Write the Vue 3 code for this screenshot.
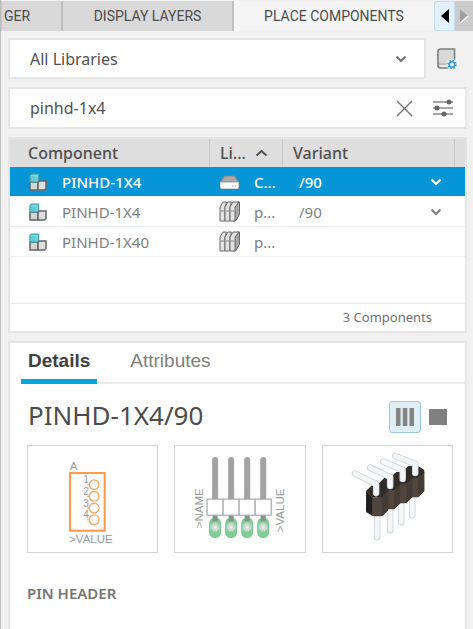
<script setup>
import { ref } from 'vue'

const library = ref('all')
const query = ref('pinhd-1x4')
const selected = ref(0)
const rows = [
  { name: 'PINHD-1X4', lib: 'C...', kind: 'drive', variant: '/90' },
  { name: 'PINHD-1X4', lib: 'p...', kind: 'books', variant: '/90' },
  { name: 'PINHD-1X40', lib: 'p...', kind: 'books', variant: '' }
]
const pins = [0, 1, 2, 3]
const pads = [40, 56, 72, 88]
const lobes = [
  { x: 90, y: 30 },
  { x: 78, y: 36 },
  { x: 66, y: 42 },
  { x: 54, y: 49 }
]
</script>

<template>
  <div class="panel">
    <nav class="tabs" aria-label="Panels">
      <button class="tab tab-cut">GER</button>
      <button class="tab tab-mid">DISPLAY LAYERS</button>
      <button class="tab tab-on">PLACE COMPONENTS</button>
      <button class="scroll scroll-prev" aria-label="Scroll left">
        <svg width="8" height="14" viewBox="0 0 8 14"><path d="M8 0v14L0 7z" fill="#000" /></svg>
      </button>
      <button class="scroll scroll-next" aria-label="Scroll right">
        <svg width="10" height="16" viewBox="0 0 10 16"><path d="M1 1v14L9 8z" fill="#a0a0a0" /><path d="M1.500 15L9 8" stroke="#fff" stroke-width="1.500" /></svg>
      </button>
    </nav>

    <main class="body">
      <div class="library-row">
        <div class="box select-box">
          <select v-model="library" aria-label="Library">
            <option value="all">All Libraries</option>
          </select>
          <svg class="chev" width="12" height="8" viewBox="0 0 12 8"><path d="M1.500 1.500L6 6l4.500-4.500" fill="none" stroke="#777" stroke-width="2.200" /></svg>
        </div>
        <button class="icon-btn lib-btn" aria-label="Library manager">
          <svg width="20" height="22" viewBox="0 0 20 22">
            <path d="M4 1h13.500v19H3.500Q1 20 1 17.500V3.500Q1 1 4 1z" fill="#d9d9d9" stroke="#7d7d7d" stroke-width="1.600" />
            <path d="M2 16h9" stroke="#aaa" />
            <path d="M3 17.500h8v1.500H4z" fill="#eee" />
            <circle cx="15" cy="16.500" r="5.500" fill="#f1f1f1" />
            <circle cx="15" cy="16.500" r="2.700" fill="#f1f1f1" stroke="#2f98e4" stroke-width="1.600" />
            <circle cx="15" cy="16.500" r="4" fill="none" stroke="#2f98e4" stroke-width="1.500" stroke-dasharray="1.500 1.642" />
          </svg>
        </button>
      </div>

      <div class="box search-box">
        <input v-model="query" type="text" aria-label="Search components" />
        <button class="icon-btn" aria-label="Clear search" @click="query = ''">
          <svg width="17" height="17" viewBox="0 0 17 17"><path d="M1 1l15 15M16 1L1 16" stroke="#707070" stroke-width="1.400" /></svg>
        </button>
        <button class="icon-btn" aria-label="Filters">
          <svg width="22" height="18" viewBox="0 0 22 18">
            <path d="M1 3h20M1 9h20M1 15h20" stroke="#8a8a8a" stroke-width="1.500" />
            <g fill="#666"><circle cx="17" cy="3" r="2.500" /><circle cx="5" cy="9" r="2.500" /><circle cx="12" cy="15" r="2.500" /></g>
          </svg>
        </button>
      </div>

      <section class="box results">
        <table>
          <colgroup><col class="c-name" /><col class="c-lib" /><col /><col class="c-end" /></colgroup>
          <thead>
            <tr>
              <th>Component</th>
              <th>
                <span class="sort">Li...
                  <svg width="13" height="8" viewBox="0 0 13 8"><path d="M1.500 6.500l5-4.500 5 4.500" fill="none" stroke="#505050" stroke-width="2" /></svg>
                </span>
              </th>
              <th>Variant</th>
              <th></th>
            </tr>
          </thead>
          <tbody>
            <tr v-for="(r, i) in rows" :key="i" :class="{ on: i === selected }" @click="selected = i">
              <td>
                <div class="cell cell-name">
                  <svg width="18" height="18" viewBox="0 0 18 18">
                    <path d="M1 9h8v8H1z" fill="#d4d4d4" stroke="#666" stroke-width="1.500" />
                    <path d="M9 9.500L10.500 8H17v7.500L15.500 17H9z" fill="#dedede" stroke="#666" stroke-width="1.500" />
                    <path d="M1 2.500L2.500 1H9.500v6.500L8 9H1z" fill="#62cbd5" stroke="#3c9ba8" stroke-width="1.200" />
                    <path d="M1.500 2.800h6.500V8.500M8 2.800l1.200-1.300" fill="none" stroke="#8de0e6" />
                  </svg>
                  <span>{{ r.name }}</span>
                </div>
              </td>
              <td>
                <div class="cell cell-lib">
                  <svg v-if="r.kind === 'drive'" width="22" height="20" viewBox="0 0 22 20">
                    <path d="M5.500 4h10l4.500 6.500H1z" fill="#a9a9a9" stroke="#858585" />
                    <path d="M1 10h19v5q0 2-1.500 2h-16Q1 17 1 15z" fill="#fafafa" stroke="#777" stroke-width=".6" />
                    <path d="M13 14h1M16 14h1" stroke="#999" />
                  </svg>
                  <svg v-else width="22" height="22" viewBox="0 0 22 22">
                    <g fill="#e3e3e3" stroke="#686868">
                      <path d="M14 6l4-5h2.500v12.500l-4 6.500H14z" fill="#a5a5a5" />
                      <path d="M1 6l3-5h3.500L6 6v14H1z" />
                      <path d="M6 6l3-5h3.500L11 6v14H6z" />
                      <path d="M11 6l3-5h6l-4 5v14h-5z" />
                    </g>
                    <path d="M2 10h3M7 10h3M12 10h3" stroke="#888" />
                  </svg>
                  <span>{{ r.lib }}</span>
                </div>
              </td>
              <td colspan="2">
                <div class="cell cell-variant">
                  <span>{{ r.variant }}</span>
                  <svg v-if="r.variant" width="12" height="8" viewBox="0 0 12 8"><path d="M1.500 1.500L6 6l4.500-4.500" fill="none" stroke="currentColor" stroke-width="2.200" /></svg>
                </div>
              </td>
            </tr>
          </tbody>
        </table>
        <footer>3 Components</footer>
      </section>

      <section class="box details">
        <div class="subtabs">
          <button class="subtab active">Details</button>
          <button class="subtab">Attributes</button>
        </div>
        <div class="title-row">
          <h1>PINHD-1X4/90</h1>
          <button class="view view-on" aria-label="Column view">
            <svg width="18" height="18" viewBox="0 0 18 18"><path d="M0 0h4.500v18H0zM6.800 0h4.500v18H6.800zM13.500 0H18v18h-4.500z" fill="#848484" /></svg>
          </button>
          <button class="view" aria-label="Single view">
            <svg width="18" height="16" viewBox="0 0 18 16"><path d="M0 0h18v16H0z" fill="#808080" /></svg>
          </button>
        </div>

        <div class="previews">
          <figure>
            <svg viewBox="0 0 129 106" role="img" aria-label="Symbol">
              <g font-family="Liberation Sans, sans-serif" fill="#999">
                <text x="42" y="24" font-size="11">A</text>
                <text x="41" y="97" font-size="11.500">&gt;VALUE</text>
                <g font-size="10">
                  <text v-for="p in pins" :key="p" x="55" :y="37 + p * 11.700">{{ p + 1 }}</text>
                </g>
              </g>
              <rect x="42" y="27" width="34.500" height="57.500" fill="none" stroke="#f99a4b" stroke-width="2" />
              <g v-for="p in pins" :key="p" fill="none" stroke="#f7a560" stroke-width="1.300">
                <circle cx="66" :cy="38.500 + p * 11.700" r="4.800" />
                <path :d="`M59 ${38.500 + p * 11.700}h2`" />
              </g>
            </svg>
          </figure>
          <figure>
            <svg viewBox="0 0 129 106" role="img" aria-label="Footprint">
              <g v-for="x in pads" :key="x">
                <rect :x="x - 6" y="71" width="12" height="21" rx="6" fill="#80cc99" />
                <path :d="`M${x} 14v29`" stroke="#a3a3a3" stroke-width="6" stroke-linecap="round" />
                <path :d="`M${x} 69v6`" stroke="#85948c" stroke-width="5" />
                <circle :cx="x" cy="81" r="4.500" fill="#c7ddce" stroke="#aac5b3" />
                <circle :cx="x" cy="81" r="1.500" fill="#e9f3ec" />
                <rect :x="x - 8" y="53" width="16" height="16" fill="#fff" stroke="#aaa" stroke-width="1.200" />
                <path :d="`M${x} 43v10`" stroke="#a3a3a3" stroke-width="6" />
              </g>
              <g font-family="Liberation Sans, sans-serif" font-size="11.500" fill="#999">
                <text transform="translate(28 82) rotate(-90)">&gt;NAME</text>
                <text transform="translate(109 86) rotate(-90)">&gt;VALUE</text>
              </g>
            </svg>
          </figure>
          <figure>
            <svg viewBox="0 0 129 106" role="img" aria-label="3D model">
              <g fill="none" stroke-linecap="round">
                <path d="M54 66v25M67 60v24M78 54v22M89 46v23" stroke="#c9d5dd" stroke-width="6.500" />
                <path d="M54 66v25M67 60v24M78 54v22M89 46v23" stroke="#f5f6f7" stroke-width="4.800" />
              </g>
              <g v-for="l in lobes" :key="l.x">
                <path :d="`M${l.x - 11} ${l.y - 4}l6 6h10l6-6v19l-6 6h-9l-7-4z`" fill="#51463f" />
                <path :d="`M${l.x - 11} ${l.y - 4}l6-6h10l6 4v3l-6 5h-10z`" fill="#302c2a" />
                <path :d="`M${l.x + 5} ${l.y + 2}l6-6v19l-6 6z`" fill="#453b36" />
              </g>
              <path d="M43 45l6 6v18l-6-4z" fill="#1f1e1e" />
              <g fill="none" stroke-linejoin="round" stroke-linecap="round">
                <path d="M92 27v-9L72 10M79.500 33v-9L60 15.500M67 40v-9L47 21.500M53 47v-9L32 27.500" stroke="#c9d5dd" stroke-width="6.500" />
                <path d="M92 27v-9L72 10M79.500 33v-9L60 15.500M67 40v-9L47 21.500M53 47v-9L32 27.500" stroke="#f5f6f7" stroke-width="4.800" />
              </g>
            </svg>
          </figure>
        </div>
        <h2>PIN HEADER</h2>
      </section>
    </main>
  </div>
</template>

<style>
body { background: #f1f1f1; }
</style>

<style scoped>
* { box-sizing: border-box; }
.panel {
  display: flex;
  flex-direction: column;
  min-height: 100vh;
  border-left: 1px solid #bcbcbc;
  background: #f1f1f1;
  font-family: "Noto Sans", sans-serif;
  font-size: 15px;
  color: #505050;
  overflow: hidden;
}
button { border: 0; padding: 0; background: none; font: inherit; color: inherit; }
svg { display: block; flex: none; }
.tabs { display: flex; height: 31px; padding-top: 1px; }
.tab {
  background: #d9d9d9;
  border-right: 2px solid #bfbfbf;
  font-family: Roboto, sans-serif;
  font-size: 14px;
  color: #4c4c4c;
  white-space: nowrap;
}
.tab-cut { width: 62px; padding-left: 2px; text-align: left; border-left: 1px solid #c8c8c8; }
.tab-mid { width: 171px; }
.tab-on { flex: 1; background: #f5f5f5; border-right: 0; }
.scroll { display: flex; align-items: center; justify-content: center; }
.scroll-prev { width: 21px; background: #e2f1fd; border: 1px solid #c4dff2; border-radius: 2px; }
.scroll-next { width: 18px; background: #cbcbcb; }
.body {
  flex: 1;
  display: flex;
  flex-direction: column;
  gap: 8px;
  padding: 7px 6px 0 7px;
}
.box { background: #fff; border: 2px solid #e5e5e5; }
.library-row { display: flex; }
.select-box { flex: 1; display: flex; align-items: center; height: 41px; padding-right: 17px; font-size: 16px; }
select {
  flex: 1;
  appearance: none;
  border: 0;
  background: none;
  padding: 0 0 0 20px;
  font: inherit;
  color: inherit;
}
.lib-btn { width: 41px; padding-left: 11px; }
.search-box { display: flex; align-items: center; gap: 19px; height: 42px; padding-right: 11px; font-size: 16px; }
input {
  flex: 1;
  min-width: 0;
  border: 0;
  background: none;
  padding: 0 0 0 20px;
  font: inherit;
  color: inherit;
  outline: 0;
}
.results { display: flex; flex-direction: column; height: 196px; }
table { width: 100%; table-layout: fixed; border-collapse: separate; border-spacing: 0; }
.c-name { width: 200px; }
.c-lib { width: 73px; }
.c-end { width: 10px; }
th {
  height: 28px;
  padding: 0 0 0 10px;
  background: #dedede;
  border-right: 1px solid #c9c9c9;
  text-align: left;
  font-size: 16px;
  line-height: 22px;
  font-weight: 500;
  color: #505050;
}
th:first-child { padding-left: 18px; }
th:last-child { border-right: 0; padding: 0; }
.sort { display: flex; align-items: center; gap: 9px; }
td { height: 30px; padding: 0; border-bottom: 1px solid #ebeff0; color: #808080; }
.on td { background: #0696d7; color: #fff; font-weight: 500; }
.cell { display: flex; align-items: center; }
.cell-name { gap: 15px; padding-left: 19px; }
.cell-lib { gap: 13px; padding-left: 9px; }
.cell-variant { justify-content: space-between; padding: 0 23px 0 16px; }
footer {
  margin-top: auto;
  height: 28px;
  padding-right: 33px;
  border-top: 1px solid #e6eaec;
  text-align: right;
  font-size: 13px;
  line-height: 27px;
  color: #707070;
}
.details { flex: 1; border-bottom: 0; }
.subtabs {
  display: flex;
  gap: 18px;
  height: 41px;
  margin-left: 11px;
  border-bottom: 2px solid #ebebeb;
  font-family: "Liberation Sans", sans-serif;
  font-size: 19px;
}
.subtab { height: 41px; padding: 0 15px; border-bottom: 5px solid transparent; color: #808080; }
.active { padding: 0 7px; border-color: #06a5dc; font-weight: 700; color: #404040; }
.title-row { display: flex; align-items: center; height: 61px; padding: 4px 18px 0; }
h1 { flex: 1; margin: 0; padding-bottom: 4px; font-size: 26px; font-weight: 400; line-height: 32px; color: #4c4c4c; }
.view { display: flex; align-items: center; justify-content: center; height: 32px; }
.view-on { width: 32px; margin-right: 8px; background: #e0eef6; border: 1px solid #9fc6dc; border-radius: 3px; }
.previews { display: grid; grid-template-columns: repeat(3, 1fr); gap: 16px; padding: 0 12px 0 17px; }
figure { margin: 0; border: 1px solid #d3d3d3; }
figure svg { width: 100%; height: auto; }
h2 { margin: 30px 17px 0; font-size: 15px; line-height: 20px; font-weight: 600; color: #767676; }
</style>
